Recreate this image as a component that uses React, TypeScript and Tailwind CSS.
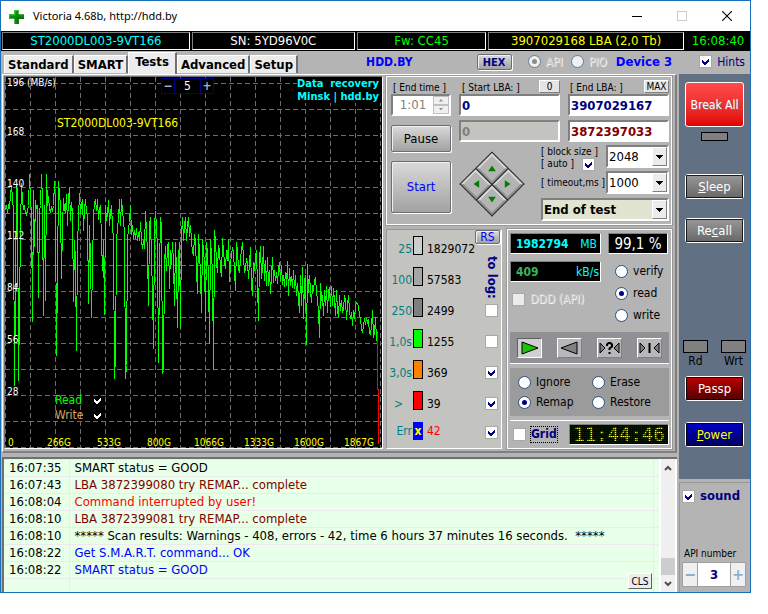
import { useState } from 'react'
import type { ReactNode } from 'react'
import clsx from 'clsx'

interface LogRow {
  time: string
  text: string
  color: string
}

const LOG_ROWS: LogRow[] = [
  { time: '16:07:35', text: 'SMART status = GOOD', color: 'text-black' },
  { time: '16:07:43', text: 'LBA 3872399080 try REMAP... complete', color: 'text-[#800000]' },
  { time: '16:08:04', text: 'Command interrupted by user!', color: 'text-[#ff0000]' },
  { time: '16:08:10', text: 'LBA 3872399081 try REMAP... complete', color: 'text-[#800000]' },
  { time: '16:08:10', text: '***** Scan results: Warnings - 408, errors - 42, time 6 hours 37 minutes 16 seconds.  *****', color: 'text-black' },
  { time: '16:08:22', text: 'Get S.M.A.R.T. command... OK', color: 'text-[#0000ff]' },
  { time: '16:08:22', text: 'SMART status = GOOD', color: 'text-[#0000ff]' },
  { time: '', text: '', color: 'text-black' },
]

const BLOCKS = [
  { label: '25', color: 'bg-[#cdcdcd]', count: '1829072' },
  { label: '100', color: 'bg-[#a6a6aa]', count: '57583' },
  { label: '250', color: 'bg-[#808080]', count: '2499', log: false },
  { label: '1,0s', color: 'bg-[#00ff00]', count: '1255', log: false },
  { label: '3,0s', color: 'bg-[#ff8000]', count: '369', log: true },
  { label: '>', color: 'bg-[#ff0000]', count: '39', log: true },
]

const SPEED =
  '5,210 6,205 7,212 8,205 9,207 10,195 11,185 12,198 13,211 14,385 15,290 16,185 17,190 18,380 19,311 20,225 21,183 22,200 23,208 24,206 25,212 26,214 27,210 28,205 29,174 30,200 31,212 32,321 33,190 34,246 35,200 36,208 37,205 38,297 39,210 40,205 41,174 42,200 43,315 44,205 45,300 46,174 47,205 48,196 49,209 50,211 51,207 52,210 53,205 54,181 55,205 56,355 57,274 58,181 59,193 60,205 61,278 62,225 63,198 64,208 65,212 66,194 67,225 68,198 69,187 70,220 71,202 72,212 73,301 74,240 75,260 76,350 77,245 78,217 79,193 80,213 81,205 82,199 83,230 84,208 85,199 86,212 87,215 88,303 89,225 90,260 91,317 92,265 93,215 94,202 95,199 96,210 97,199 98,219 99,208 100,205 101,240 102,270 103,240 104,314 105,205 106,220 107,214 108,200 109,225 110,212 111,205 112,225 113,240 114,378 115,355 116,240 117,228 118,218 119,199 120,225 121,199 122,210 123,220 124,232 125,378 126,365 127,240 128,228 129,222 130,205 131,234 132,225 133,238 134,230 135,238 136,228 137,240 138,232 139,240 140,222 141,240 142,248 143,240 144,248 145,211 146,232 147,250 148,305 149,225 150,217 151,260 152,290 153,348 154,225 155,211 156,225 157,250 158,362 159,270 160,217 161,225 162,373 163,370 164,262 165,246 166,270 167,246 168,242 169,288 170,250 171,264 172,242 173,262 174,305 175,242 176,270 177,327 178,258 179,242 180,327 181,235 182,217 183,240 184,225 185,217 186,240 187,225 188,217 189,236 190,225 191,240 192,252 193,255 194,234 195,240 196,270 197,293 198,234 199,252 200,275 201,312 202,239 203,250 204,262 205,321 206,242 207,252 208,278 209,343 210,239 211,256 212,270 213,369 214,230 215,240 216,262 217,272 218,245 219,250 220,268 221,276 222,238 223,250 224,262 225,268 226,250 227,260 228,239 229,281 230,262 231,255 232,247 233,252 234,270 235,290 236,242 237,250 238,268 239,272 240,258 241,250 242,242 243,256 244,272 245,268 246,258 247,262 248,278 249,262 250,247 251,285 252,295 253,262 254,270 255,256 256,250 257,285 258,320 259,257 260,246 261,278 262,268 263,246 264,280 265,260 266,285 267,257 268,285 269,270 270,293 271,275 272,257 273,282 274,270 275,280 276,272 277,283 278,268 279,262 280,280 281,265 282,284 283,275 284,286 285,272 286,285 287,261 288,295 289,268 290,285 291,276 292,287 293,270 294,288 295,275 296,295 297,283 298,298 299,312 300,275 301,305 302,267 303,318 304,280 305,275 306,344 307,264 308,292 309,275 310,290 311,302 312,285 313,290 314,280 315,278 316,290 317,300 318,310 319,337 320,283 321,300 322,295 323,315 324,290 325,305 326,286 327,312 328,290 329,288 330,306 331,286 332,305 333,288 334,300 335,315 336,290 337,310 338,317 339,295 340,310 341,300 342,312 343,308 344,295 345,300 346,319 347,305 348,295 349,310 350,318 351,312 352,325 353,310 354,318 355,305 356,302 357,303 358,306 359,315 360,318 361,328 362,332 363,325 364,318 365,324 366,318 367,322 368,320 369,333 370,334 371,325 372,310 373,337 374,332 375,317 376,340 377,332'

const GRID_X = Array.from({ length: 16 }, (_, i) => 5 + i * 25)
const GRID_Y = Array.from({ length: 15 }, (_, i) => 83 + i * 26)
const SPEED_LABELS = ['196 (MB/s)', '168', '140', '112', '84', '56', '28']
const SIZE_LABELS = ['0', '266G', '533G', '800G', '1066G', '1333G', '1600G', '1867G']

function CheckMark({ className }: { className: string }) {
  return (
    <svg viewBox="0 0 9 9" className={clsx('pointer-events-none', className)} shapeRendering="crispEdges">
      <path d="M1 3v3l2 2h1l4-4V1L4 5H3z" fill="currentColor" />
    </svg>
  )
}

interface CheckProps {
  id: string
  label: string
  checked?: boolean
  disabled?: boolean
}

function Check({ id, label, checked = false, disabled }: CheckProps) {
  return (
    <span className="relative block size-[13px] shrink-0">
      <input
        id={id}
        type="checkbox"
        aria-label={label}
        defaultChecked={checked}
        disabled={disabled}
        className="peer block size-[13px] appearance-none border border-[#a8a8a8] bg-white disabled:bg-[#ececec]"
      />
      <CheckMark className="absolute left-[2px] top-[2px] hidden size-[9px] text-[#000080] peer-checked:block" />
    </span>
  )
}

interface RadioProps {
  name: string
  label: string
  checked?: boolean
  disabled?: boolean
}

function Radio({ name, label, checked = false, disabled }: RadioProps) {
  return (
    <label className="flex items-center gap-[5px]">
      <span className="relative block size-[13px] shrink-0">
        <input
          type="radio"
          name={name}
          defaultChecked={checked}
          disabled={disabled}
          className="peer block size-[13px] appearance-none rounded-full border border-[#2b4f7b] bg-white disabled:border-[#5c7ea3] disabled:bg-[#f0f0f0]"
        />
        <span className="pointer-events-none absolute left-[4px] top-[4px] hidden size-[5px] rounded-full bg-[#000080] peer-checked:block peer-disabled:bg-[#8c8c8c]" />
      </span>
      <span className={clsx(disabled && 'text-[#c8c8c8] [text-shadow:1px_1px_0_#f4f4f4]')}>{label}</span>
    </label>
  )
}

function Select({ label, value, className, options }: { label: string; value: string; className: string; options: string[] }) {
  return (
    <span className={clsx('relative block border-2 border-[#808080] border-r-white border-b-white', className)}>
      <select
        aria-label={label}
        defaultValue={value}
        className="block h-full w-full appearance-none bg-transparent pl-px outline-none"
      >
        {options.map((option) => (
          <option key={option}>{option}</option>
        ))}
      </select>
      <span className="pointer-events-none absolute inset-y-0 right-0 flex w-[15px] items-center justify-center border border-white border-r-[#808080] border-b-[#808080] bg-[#ececec]">
        <svg viewBox="0 0 7 4" className="w-[7px]" shapeRendering="crispEdges">
          <path d="M0 0h7L3.5 4z" />
        </svg>
      </span>
    </span>
  )
}

// grey gradient button with the light outer bevel
function FlatButton({ children, className }: { children: ReactNode; className: string }) {
  return (
    <button
      className={clsx(
        'block rounded-[2px] border border-[#6e6e6e] bg-linear-to-b from-[#dadada] to-[#a2a2a2] shadow-[1px_1px_0_#fff,inset_1px_1px_0_#f0f0f0]',
        className,
      )}
    >
      {children}
    </button>
  )
}

function SideButton({ children, className }: { children: ReactNode; className: string }) {
  return (
    <button className={clsx('block w-full rounded-[3px] border border-white text-[13px]', className)}>
      <span className="flex h-full items-center justify-center border border-black/80">{children}</span>
    </button>
  )
}

function TitleBar() {
  return (
    <header className="flex h-[30px] items-center bg-white pl-[8px] font-['Noto_Sans','Open_Sans',sans-serif] text-[11px] text-black">
      <svg viewBox="0 0 14 14" className="mr-[9px] w-[15px]">
        <path d="M5 1h4v4h5v4H9v5H5V9H0V5h5z" fill="#0a8a0a" />
        <path d="M5 1h4v1H6v4H1v2H0V5h5z" fill="#2fbf2f" />
        <path d="M9 9h5V8H8v6h1z" fill="#045a04" />
      </svg>
      <h1 className="flex-1">Victoria 4.68b, http://hdd.by</h1>
      <button aria-label="Minimize" className="flex w-[46px] justify-center">
        <svg viewBox="0 0 10 10" className="w-[10px]" shapeRendering="crispEdges">
          <path d="M0 5.5h10" stroke="#000" />
        </svg>
      </button>
      <button aria-label="Maximize" disabled className="flex w-[44px] justify-center">
        <svg viewBox="0 0 10 10" className="w-[10px]" shapeRendering="crispEdges">
          <rect x="0.5" y="0.5" width="9" height="9" fill="none" stroke="#ccc" />
        </svg>
      </button>
      <button aria-label="Close" className="flex w-[46px] justify-center">
        <svg viewBox="0 0 10 10" className="w-[10px]">
          <path d="M0 0l10 10M10 0L0 10" stroke="#000" strokeWidth="1.1" />
        </svg>
      </button>
    </header>
  )
}

function InfoBar() {
  const box = 'flex items-center justify-center border border-[#808080] border-r-white border-b-white'
  return (
    <div className="flex h-[20px] gap-[2px] bg-black py-px pl-px text-[13px]">
      <div className={clsx(box, 'flex-[188] text-[#00ffff]')}>ST2000DL003-9VT166</div>
      <div className={clsx(box, 'flex-[163] text-white')}>SN: 5YD96V0C</div>
      <div className={clsx(box, 'flex-[129] text-[#00ff00]')}>Fw: CC45</div>
      <div className={clsx(box, 'flex-[196] text-[#ffff00]')}>3907029168 LBA (2,0 Tb)</div>
      <div className="flex w-[64px] items-center justify-center text-[#00ff00]">16:08:40</div>
    </div>
  )
}

function TabBar() {
  const [active, setActive] = useState('Tests')
  return (
    <nav className="flex h-[23px] items-end bg-[#b4b4b4] pl-[3px]">
      <div className="flex items-end">
        {['Standard', 'SMART', 'Tests', 'Advanced', 'Setup'].map((tab) => (
          <button
            key={tab}
            onClick={() => setActive(tab)}
            className={clsx(
              'border-t border-r-2 border-l border-t-white border-r-[#707070] border-l-white bg-[#ececec] text-[13px] font-bold',
              active === tab ? 'h-[22px] px-[6px] pb-[3px]' : 'mb-px h-[18px] px-[3px]',
            )}
          >
            {tab}
          </button>
        ))}
      </div>
      <div className="flex flex-1 items-center self-center pb-[2px]">
        <a href="#hdd" className="ml-auto text-[12px] font-bold text-[#0000ff]">HDD.BY</a>
        <FlatButton className="ml-[64px] h-[16px] w-[35px] text-[11px] font-bold text-[#000080]">HEX</FlatButton>
        <div className="ml-[16px] flex gap-[8px] text-[12px]">
          <Radio name="mode" label="API" checked disabled />
          <Radio name="mode" label="PIO" disabled />
        </div>
        <span className="ml-[9px] text-[13px] font-bold text-[#0000ff]">Device 3</span>
        <div className="mr-[5px] ml-[27px] flex items-center gap-[5px] text-[12px] text-[#000080]">
          <Check id="hints" label="Hints" checked />
          <label htmlFor="hints">Hints</label>
        </div>
      </div>
    </nav>
  )
}

function Chart() {
  return (
    <section className="relative min-w-0 flex-1 self-start border border-[#707070] border-r-white border-b-white bg-black">
      <svg viewBox="5 77 377 371" className="block w-full" shapeRendering="crispEdges">
        <g stroke="#6c6c6c" strokeDasharray="5 3">
          {GRID_X.map((x) => (
            <path key={x} d={`M${x + 0.5} 77V448`} />
          ))}
          {GRID_Y.map((y) => (
            <path key={y} d={`M5 ${y + 0.5}H382`} />
          ))}
        </g>
        <g transform="translate(0.5 0.5)" fill="none">
          <polyline points={SPEED} stroke="#00ff00" />
          <polyline points="377,332 377,389 378,389 378,443" stroke="#ff0000" />
        </g>
        <g fontSize="10" fill="#fff">
          {SPEED_LABELS.map((label, i) => (
            <text key={label} x="7" y={i === 0 ? 86 : 83 + i * 52}>{label}</text>
          ))}
        </g>
        <g fontSize="10" fill="#ffff00">
          {SIZE_LABELS.map((label, i) => (
            <text key={label} x={i === 0 ? 8 : i * 50 + 9} y="446" textAnchor={i === 0 ? 'start' : 'middle'}>{label}</text>
          ))}
        </g>
        <text x="57" y="127" fontSize="12" fill="#ffff00">ST2000DL003-9VT166</text>
      </svg>
      <div className="absolute top-px left-[156px] flex h-[16px] border border-[#000080] bg-black text-[12px] leading-[14px]">
        <button aria-label="Less" className="w-[13px] border-r border-[#000080] font-bold text-[#a0b4d8]">−</button>
        <output className="w-[25px] text-center text-white">5</output>
        <button aria-label="More" className="w-[13px] border-l border-[#000080] font-bold text-[#a0b4d8]">+</button>
      </div>
      <a href="#recovery" className="absolute top-0 right-0 bg-black pr-[3px] text-right text-[11px] leading-[13px] font-bold text-[#00ffff]">
        Data &nbsp;recovery<br />Minsk | hdd.by
      </a>
      <div className="absolute bottom-[25px] left-[50px] text-[12px] leading-[15px]">
        {[['Read', 'text-[#00ff00]'], ['Write', 'text-[#d8a060]']].map(([name, color]) => (
          <label key={name} className={clsx('flex items-center', color)}>
            <span className="w-[38px]">{name}</span>
            <span className="relative size-[9px]">
              <input type="checkbox" defaultChecked className="peer absolute inset-0 appearance-none" />
              <CheckMark className="absolute inset-0 hidden text-white peer-checked:block" />
            </span>
          </label>
        ))}
      </div>
    </section>
  )
}

const ARROWS = [
  { label: 'Up', turn: '-rotate-45' },
  { label: 'Right', turn: 'rotate-45' },
  { label: 'Left', turn: 'rotate-225' },
  { label: 'Down', turn: 'rotate-135' },
]

function ArrowPad() {
  return (
    <div className="m-[10px] grid size-[46px] rotate-45 grid-cols-2 gap-px border border-dotted border-black">
      {ARROWS.map(({ label, turn }) => (
        <button
          key={label}
          aria-label={label}
          className="flex items-center justify-center border-2 border-[#d8d8d8] border-r-[#909090] border-b-[#909090] bg-[#b4b4b4] outline outline-[#303030]"
        >
          <svg viewBox="0 0 8 6" className={clsx('w-[8px]', turn)}>
            <path d="M4 0l4 6H0z" fill="#008000" />
          </svg>
        </button>
      ))}
    </div>
  )
}

function RangePanel() {
  const field = 'block h-[22px] w-full min-w-0 border-2 border-[#808080] border-r-white border-b-white px-px text-[13px] font-bold'
  const mini = 'h-[13px] border border-white border-r-[#808080] border-b-[#808080] bg-[#e4e4e4] leading-[11px]'
  return (
    <section className="flex gap-[8px] border border-white py-[3px] pr-[2px] pl-[4px] outline outline-[#989898]">
      <div className="w-[60px]">
        <label htmlFor="end-time" className="block h-[14px] pl-[2px] text-[10px] whitespace-nowrap">[ End time ]</label>
        <div className="flex h-[22px] border-2 border-[#808080] border-r-white border-b-white bg-white">
          <input id="end-time" defaultValue="1:01" disabled className="w-[40px] min-w-0 text-center text-[13px] text-[#808080]" />
          <div className="flex flex-1 flex-col text-[#909090]">
            <button disabled aria-label="Later" className="flex flex-1 items-center justify-center border border-[#c0c0c0] bg-[#f0f0f0]">
              <svg viewBox="0 0 5 3" className="w-[4px]"><path d="M0 3h5L2.500 0z" fill="currentColor" /></svg>
            </button>
            <button disabled aria-label="Earlier" className="flex flex-1 items-center justify-center border border-[#c0c0c0] bg-[#f0f0f0]">
              <svg viewBox="0 0 5 3" className="w-[4px]"><path d="M0 0h5L2.500 3z" fill="currentColor" /></svg>
            </button>
          </div>
        </div>
        <FlatButton className="mt-[9px] h-[27px] w-full text-[13px]">Pause</FlatButton>
        <FlatButton className="mt-[9px] h-[52px] w-full text-[13px] text-[#0000ff]">Start</FlatButton>
      </div>
      <div className="min-w-0 flex-1">
        <div className="grid grid-cols-2 gap-x-[8px] text-[10px]">
          <div>
            <div className="flex h-[14px] justify-between pl-[3px]">
              <label htmlFor="start-lba">[ Start LBA: ]</label>
              <button className={clsx(mini, 'w-[21px]')}>0</button>
            </div>
            <input id="start-lba" defaultValue="0" className={clsx(field, 'bg-white text-[#000080]')} />
            <input aria-label="Current start LBA" defaultValue="0" disabled className={clsx(field, 'mt-[4px] bg-[#c3c3bf] text-[#808080]')} />
          </div>
          <div>
            <div className="flex h-[14px] justify-between pl-[2px]">
              <label htmlFor="end-lba">[ End LBA: ]</label>
              <button className={clsx(mini, 'w-[25px]')}>MAX</button>
            </div>
            <input id="end-lba" defaultValue="3907029167" className={clsx(field, 'bg-white text-[#000080]')} />
            <input aria-label="Current end LBA" defaultValue="3872397033" className={clsx(field, 'mt-[4px] bg-white text-[#800000]')} />
          </div>
        </div>
        <div className="flex">
          <div className="pt-[9px]">
            <ArrowPad />
          </div>
          <div className="ml-auto w-[128px] pt-[3px]">
            <div className="flex justify-between">
              <div className="pt-px text-[10px] leading-[12px] whitespace-nowrap">
                <div>[ block size ]</div>
                <div className="flex gap-[8px]">
                  <label htmlFor="auto-size">[ auto ]</label>
                  <Check id="auto-size" label="Auto block size" checked />
                </div>
              </div>
              <Select label="Block size" value="2048" options={['256', '1024', '2048']} className="h-[23px] w-[63px] bg-white text-[13px]" />
            </div>
            <div className="flex items-center justify-between">
              <span className="text-[10px] whitespace-nowrap">[ timeout,ms ]</span>
              <Select label="Timeout" value="1000" options={['500', '1000', '2000']} className="h-[23px] w-[63px] bg-white text-[13px]" />
            </div>
            <Select label="After scan" value="End of test" options={['End of test', 'Loop test', 'Shutdown PC']} className="mt-[4px] h-[23px] w-full bg-[#e0e4d0] text-[13px] font-bold" />
          </div>
        </div>
      </div>
    </section>
  )
}

function BlocksPanel() {
  return (
    <section className="relative w-[116px] border border-[#989898] border-r-white border-b-white bg-[#c3c3bf] pt-[6px] text-[12px]">
      <ul>
        {BLOCKS.map(({ label, color, count, log }) => (
          <li key={label} className="flex h-[31px] items-start">
            <span className={clsx('w-[25px] pt-[5px] text-right text-[#008080]', label === '>' && 'pr-[9px]')}>{label}</span>
            <span className={clsx('ml-px h-[19px] w-[10px] border border-black', color)} />
            <span className="ml-[4px] flex-1 pt-[5px]">{count}</span>
            {log !== undefined && (
              <span className="mt-[6px] mr-[3px]">
                <Check id={`log-${label}`} label={`Log ${label}`} checked={log} />
              </span>
            )}
          </li>
        ))}
        <li className="flex items-center">
          <span className="w-[25px] text-right text-[#008080]">Err</span>
          <span className="ml-px flex h-[18px] w-[10px] items-center justify-center bg-[#0000ff] font-bold text-[#ffff00]">x</span>
          <span className="ml-[4px] flex-1 text-[#ff0000]">42</span>
          <span className="mt-[2px] mr-[3px]">
            <Check id="log-err" label="Log errors" checked />
          </span>
        </li>
      </ul>
      <FlatButton className="absolute top-0 right-px h-[14px] w-[25px] text-[12px] leading-[12px] text-[#0000ff]">RS</FlatButton>
      <span className="absolute top-[26px] right-[2px] text-[13px] leading-[14px] font-bold text-[#000080] [writing-mode:vertical-rl]">to log:</span>
    </section>
  )
}

function PlayButton({ label, active, children }: { label: string; active?: boolean; children: ReactNode }) {
  return (
    <button
      aria-label={label}
      className={clsx(
        'h-[20px] w-[25px] border',
        active ? 'border-[#606060] border-r-white border-b-white bg-[#d0d0d0]' : 'border-white border-r-[#808080] border-b-[#808080] bg-[#b8b8b8]',
      )}
    >
      <svg viewBox="0 0 23 18" className="block w-full" stroke="#000" strokeWidth="1">{children}</svg>
    </button>
  )
}

function ControlPanel() {
  const lcd = 'flex items-center border border-[#808080] border-r-white border-b-white bg-black whitespace-nowrap'
  return (
    <section className="flex min-w-0 flex-1 flex-col border border-white px-[2px] pt-[3px] text-[12px] outline outline-[#989898]">
      <div className="grid grid-cols-[91px_1fr] gap-x-[7px] gap-y-[7px] pr-px">
        <div className={clsx(lcd, 'h-[21px] justify-between pr-[3px] pl-[5px] text-[#00ffff]')}>
          <b>1982794</b>
          <span>MB</span>
        </div>
        <div className={clsx(lcd, 'h-[21px] justify-center text-[15px] text-white')}>99,1 %</div>
        <div>
          <div className={clsx(lcd, 'h-[21px] justify-between pr-px pl-[5px] text-[#00ffff]')}>
            <b className="text-[#3cb45a]">409</b>
            <span>kB/s</span>
          </div>
          <div className="mt-[9px] flex items-center gap-[5px] pl-[2px]">
            <Check id="ddd" label="DDD (API)" disabled />
            <label htmlFor="ddd" className="text-[#c8c8c8] [text-shadow:1px_1px_0_#f4f4f4]">DDD (API)</label>
          </div>
        </div>
        <div className="flex flex-col gap-[4px] pt-px pl-[7px] leading-[18px]">
          <Radio name="op" label="verify" />
          <Radio name="op" label="read" checked />
          <Radio name="op" label="write" />
        </div>
      </div>
      <div className="mt-auto flex h-[32px] items-center justify-between border-b border-white bg-[#919195] px-[7px]">
        <PlayButton label="Forward" active>
          <path d="M4 3v12l16-6z" fill="#20c010" />
        </PlayButton>
        <PlayButton label="Backward">
          <path d="M19 3v12L3 9z" fill="#808080" />
        </PlayButton>
        <PlayButton label="Random">
          <path d="M2 4v10l5-5zM21 4v10l-5-5z" fill="#808080" />
          <path d="M9 7V5.500L10.500 4h2L14 5.500v2L11.500 9.500V11M11.500 13v2" fill="none" strokeWidth="2" />
        </PlayButton>
        <PlayButton label="Butterfly">
          <path d="M2 4v10l5-5zM21 4v10l-5-5z" fill="#808080" />
          <path d="M11.500 4v10" strokeWidth="2" />
        </PlayButton>
      </div>
      <div className="mt-[4px] grid h-[48px] grid-cols-[74px_1fr] content-center gap-y-[3px] bg-[#9b9b9b] pl-[8px] leading-[17px]">
        <Radio name="bad" label="Ignore" />
        <Radio name="bad" label="Erase" />
        <Radio name="bad" label="Remap" checked />
        <Radio name="bad" label="Restore" />
      </div>
      <div className="mt-[4px] flex items-center border-t border-white py-[3px] pl-[3px]">
        <Check id="grid" label="Grid" />
        <label htmlFor="grid" className="ml-[4px] border border-dotted border-black leading-[15px] font-bold text-[#000080]">Grid</label>
        <div className="relative ml-auto h-[21px] w-[100px] border border-[#808080] border-r-white border-b-white bg-[#041c04] text-center font-['DejaVu_Sans_Mono',monospace] text-[19px] leading-[19px] text-[#ffff00]">
          <time>11:44:46</time>
          <span className="absolute inset-0 bg-[repeating-linear-gradient(0deg,#000000b0_0_1px,transparent_1px_2px),repeating-linear-gradient(90deg,#00000070_0_1px,transparent_1px_2px)]" />
        </div>
      </div>
    </section>
  )
}

function LogPanel() {
  return (
    <section className="relative mt-[4px] flex h-[135px] border-t-2 border-l-2 border-[#707070] bg-[#e8ffe8]">
      <div className="min-w-0 flex-1 overflow-hidden">
        <table className="w-full border-collapse text-[13px] leading-[16px] whitespace-pre">
          <tbody>
            {LOG_ROWS.map(({ time, text, color }, i) => (
              <tr key={i} className="h-[17px] border-t border-[#f0e8f0]">
                <td className="w-[65px] border-r border-[#f0e8f0] p-0 pl-[5px]">{time}</td>
                <td className={clsx('border-r border-[#f0e8f0] p-0 pl-[5px]', color)}>{text}</td>
                <td className="w-[6px] p-0" />
              </tr>
            ))}
          </tbody>
        </table>
      </div>
      <button className="absolute right-[25px] bottom-[3px] h-[16px] w-[24px] border border-white border-r-[#606060] border-b-[#606060] bg-[#ececec] text-[10px] leading-[13px]">CLS</button>
      <div className="flex w-[18px] flex-col items-center border-x-2 border-white bg-[#f0f0f0]">
        <button aria-label="Scroll up" className="flex h-[17px] items-center">
          <svg viewBox="0 0 8 6" className="w-[8px]"><path d="M1 5l3-3 3 3" fill="none" stroke="#505050" strokeWidth="2" /></svg>
        </button>
        <div className="mt-auto h-[17px] w-full bg-[#cdcdcd]" />
        <button aria-label="Scroll down" className="flex h-[17px] items-center">
          <svg viewBox="0 0 8 6" className="w-[8px]"><path d="M1 1l3 3 3-3" fill="none" stroke="#505050" strokeWidth="2" /></svg>
        </button>
      </div>
    </section>
  )
}

function Sidebar() {
  return (
    <aside className="flex w-[71px] shrink-0 flex-col">
      <div className="flex h-[405px] flex-col bg-[#617083] px-[6px] pt-[8px]">
        <button className="h-[45px] w-full rounded-[3px] border border-white bg-linear-to-b from-[#ff4a4a] to-[#e00000] text-[12px] whitespace-nowrap text-white [text-shadow:1px_1px_0_#808080]">
          Break All
        </button>
        <span className="mx-auto mt-[5px] h-[9px] w-[27px] border border-black bg-[#808080]" />
        <SideButton className="mt-[33px] h-[25px] bg-linear-to-b from-[#989898] to-[#686868] text-white"><span><u>S</u>leep</span></SideButton>
        <SideButton className="mt-[19px] h-[25px] bg-linear-to-b from-[#989898] to-[#686868] text-white"><span>Re<u>c</u>all</span></SideButton>
        <div className="mx-[-2px] mt-auto flex justify-between text-center text-[12px] leading-[16px]">
          <div><span className="block h-[13px] w-[25px] border border-black bg-[#808080]" />Rd</div>
          <div><span className="block h-[13px] w-[25px] border border-black bg-[#808080]" />Wrt</div>
        </div>
        <SideButton className="mt-[7px] h-[25px] bg-linear-to-b from-[#c00000] to-[#500000] text-white">Passp</SideButton>
        <SideButton className="mt-[21px] mb-[32px] h-[25px] bg-linear-to-b from-[#0000c8] to-[#000060] text-[#ffff00]"><span><u>P</u>ower</span></SideButton>
      </div>
      <div className="mt-[3px] flex flex-1 flex-col border-t border-l border-[#989898] px-[2px] pt-[5px] pb-[5px]">
        <div className="flex items-center gap-[5px] text-[13px] font-bold text-[#000080]">
          <Check id="sound" label="sound" checked />
          <label htmlFor="sound">sound</label>
        </div>
        <label htmlFor="api-number" className="mt-auto pl-[2px] text-[10px] leading-[16px] whitespace-nowrap">API number</label>
        <div className="mr-[2px] flex h-[25px] border border-[#a0a0a0] bg-white font-bold">
          <button aria-label="Previous API" className="w-[15px] border-r border-[#a0a0a0] bg-[#f0f0f0] text-[#90b0d0]">−</button>
          <input id="api-number" defaultValue="3" className="w-0 min-w-0 flex-1 text-center text-[13px] text-[#000080]" />
          <button aria-label="Next API" className="w-[15px] border-l border-[#a0a0a0] bg-[#f0f0f0] text-[#90b0d0]">+</button>
        </div>
      </div>
    </aside>
  )
}

export default function App() {
  return (
    <div className="min-h-screen bg-white pr-[17px] pb-[21px] font-['DejaVu_Sans_Condensed','DejaVu_Sans',sans-serif] leading-[16px] text-black">
      <main className="border border-[#1a6fb8] bg-[#b4b4b4]">
        <TitleBar />
        <InfoBar />
        <TabBar />
        <div className="flex">
          <div className="mr-[2px] flex min-w-0 flex-1 flex-col pl-px">
            <div className="flex gap-[3px] border-t border-r-2 border-b-2 border-l border-white border-r-[#808080] border-b-[#808080] pt-px pr-[3px] pb-[2px] pl-px">
              <Chart />
              <div className="flex w-[286px] shrink-0 flex-col gap-[4px]">
                <RangePanel />
                <div className="flex flex-1 gap-[5px]">
                  <BlocksPanel />
                  <ControlPanel />
                </div>
              </div>
            </div>
            <LogPanel />
          </div>
          <Sidebar />
        </div>
      </main>
    </div>
  )
}
